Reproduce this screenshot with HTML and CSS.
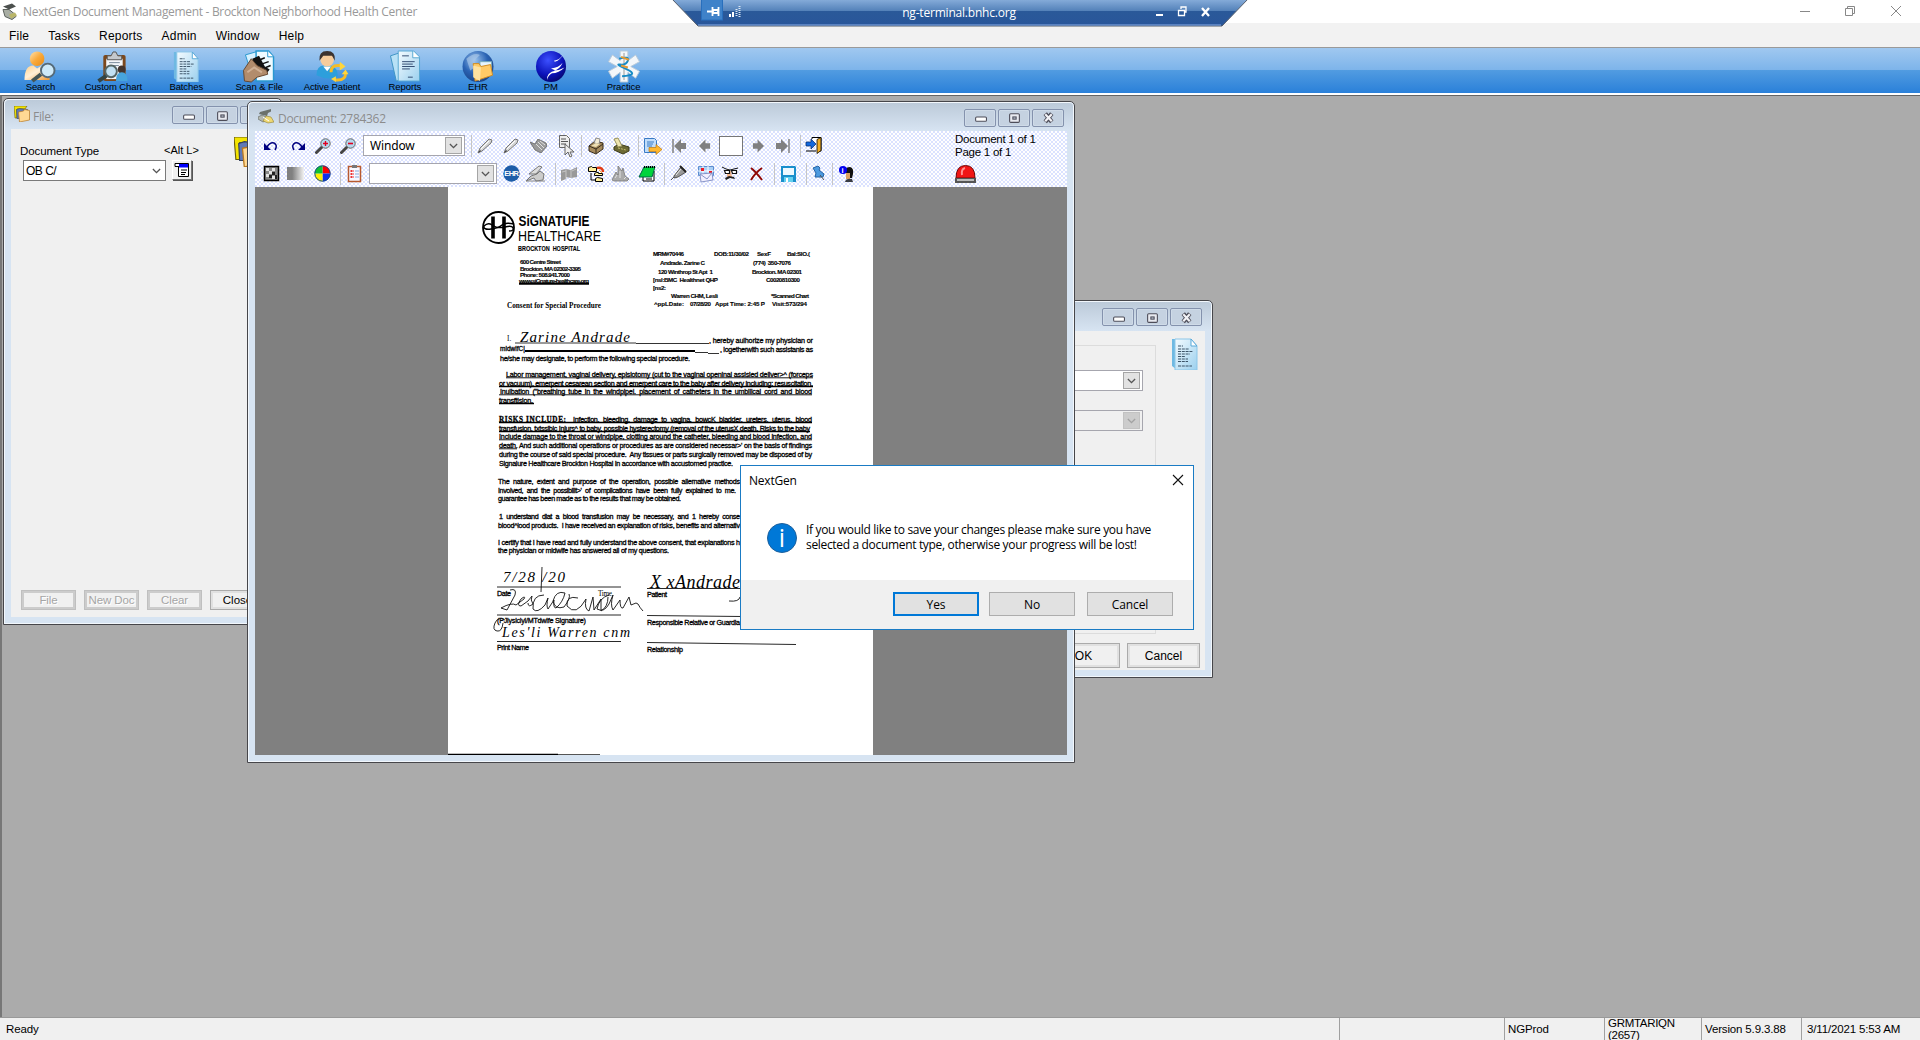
FILE: index.html
```html
<!DOCTYPE html>
<html lang="en">
<head>
<meta charset="utf-8">
<title>NextGen Document Management</title>
<link rel="stylesheet" href="styles.css">
</head>
<body>
<svg class="defs" aria-hidden="true">
  <defs>
    <linearGradient id="paper" x1="0" y1="0" x2="1" y2="1"><stop offset="0" stop-color="#f4fbff"/><stop offset="1" stop-color="#9bd0ee"/></linearGradient>
    <linearGradient id="orange" x1="0" y1="0" x2="1" y2="1"><stop offset="0" stop-color="#ffe2ad"/><stop offset=".5" stop-color="#f9a93a"/><stop offset="1" stop-color="#e98a10"/></linearGradient>
    <linearGradient id="cream" x1="0" y1="0" x2="1" y2="1"><stop offset="0" stop-color="#ffd089"/><stop offset=".45" stop-color="#fff0d8"/><stop offset="1" stop-color="#f0952a"/></linearGradient>
    <radialGradient id="globe" cx=".4" cy=".3" r=".8"><stop offset="0" stop-color="#9cc4ee"/><stop offset=".5" stop-color="#2a63b4"/><stop offset="1" stop-color="#163c7c"/></radialGradient>
    <radialGradient id="ball" cx=".4" cy=".3" r=".8"><stop offset="0" stop-color="#3c50ff"/><stop offset=".6" stop-color="#0b12b8"/><stop offset="1" stop-color="#04045c"/></radialGradient>
    <linearGradient id="fade"><stop offset=".3" stop-color="#808080"/><stop offset="1" stop-color="#f2f2f2"/></linearGradient>
    <symbol id="i-sheet" viewBox="0 0 27 32">
      <path d="M1 1h17v30H5l-4-3z" fill="#6fb9e2"/><path d="M4 1h16l6 7v24H4z" fill="url(#paper)" stroke="#8cc6e8"/><path d="M20 1v7h6z" fill="#fff" stroke="#58a8d8"/>
      <path d="M7 8h5M7 11h11M7 13.500h15M7 16h12M7 18.500h7M7 21h10M7 23.500h10M7 28h14" stroke="#3c5468" stroke-width="1" stroke-dasharray="3 .8"/>
    </symbol>
    <symbol id="i-folders" viewBox="0 0 16 16">
      <path d="M0 0h13l-2 3H3v9H1z" fill="#f4e400" stroke="#665c10" stroke-width=".6"/><path d="M2.500 3.500l3-1 8 1v9H3z" fill="#6079b5" stroke="#35405c" stroke-width=".6"/>
      <path d="M4.500 6l5-1 1-1.500 5 1V14l-10 2z" fill="#ffd994" stroke="#b97920" stroke-width=".7"/>
    </symbol>
    <symbol id="i-scan" viewBox="0 0 16 16">
      <path d="M2 3l11-3v2.500L10 4l-1 3-4-1L1 5z" fill="#6b716b"/><path d="M0 8l4-2 4 2 1 3-4 2-5-3z" fill="#b4b8b0" stroke="#666b65" stroke-width=".7"/>
      <path d="M8 7l5 1 3 5-6 1-5-2z" fill="#efd873" stroke="#8f8030" stroke-width=".6"/><path d="M5 8l6 4" stroke="#fff"/>
    </symbol>
    <symbol id="i-hand" viewBox="0 0 17 14"><path d="M0 3l5 2 3-5 8 4 1 3-6 7-6-3z" fill="#9a9a9a" stroke="#666" stroke-width=".8"/><path d="M6 5l6 6M8 3l6 6M10 2l5 4" stroke="#e0e0e0"/></symbol>
    <symbol id="i-pen" viewBox="0 0 16 16"><path d="M1 15l2-5L12 1l3 1-1 3-9 8z" fill="#d6d6d6" stroke="#777"/><path d="M4 11l8-8" stroke="#fff"/><path d="M1 15l2-3 1 1z" fill="#333"/></symbol>
    <symbol id="i-lens" viewBox="0 0 16 16"><path d="M1.500 14.500l5-5" stroke="#444" stroke-width="3" stroke-linecap="round"/><circle cx="10.500" cy="5.500" r="4.700" fill="#b4d8ee" stroke="#666"/></symbol>
    <symbol id="i-undo" viewBox="0 0 14 12"><path d="M0 3v7h7z" fill="#000080"/><path d="M3 7Q6 2 10 3q4 2 1 7" fill="none" stroke="#000080" stroke-width="1.500"/></symbol>
    <symbol id="i-arrow" viewBox="0 0 13 14"><path d="M0 7l7-7v4h5v6H7v4z" fill="#808080"/></symbol>
    <symbol id="i-chev" viewBox="0 0 10 6"><path d="M1 .8l4 4 4-4" fill="none" stroke="#555" stroke-width="1.500"/></symbol>
    <symbol id="b-min" viewBox="0 0 12 12"><rect x="1.500" y="5.500" width="10" height="4" rx="1" fill="#fff" stroke="#4d4d59"/></symbol>
    <symbol id="b-max" viewBox="0 0 12 12"><rect x="1.500" y="2.500" width="9" height="8" rx="1" fill="#e8eaf0" stroke="#4d4d59"/><rect x="4.500" y="5.500" width="3" height="2" fill="#c5d0df" stroke="#4d4d59"/></symbol>
    <symbol id="b-close" viewBox="0 0 12 12"><path d="M3 2.500l6 7.500M9 2.500L3 10" stroke="#4d4d59" stroke-width="4"/><path d="M3 3l6 6.500M9 3L3 9.500" stroke="#f2f2f6" stroke-width="2"/></symbol>
  </defs>
</svg>

<header class="titlebar">
  <svg class="app-icon" viewBox="0 0 16 16"><path d="M1 3l9-3 4 3-7 3z" fill="#4c504e"/><path d="M1 6l6 0 5 4 2 3-4 3-7-3z" fill="#a9aea4" stroke="#5c615c"/><path d="M7 11l6-2 2 3-6 3z" fill="#b9b568"/></svg>
  <span class="app-title">NextGen Document Management - Brockton Neighborhood Health Center</span>
  <svg class="win-controls" width="110" height="20" viewBox="0 0 110 20" fill="none" stroke="#888"><path d="M5 9.500h10M96 4l10 10M106 4L96 14"/><path d="M50.500 6.500h7v7h-7zM52.500 6v-1.500h7v7H58"/></svg>
</header>

<nav class="menubar"><span>File</span><span>Tasks</span><span>Reports</span><span>Admin</span><span>Window</span><span>Help</span></nav>

<div class="ribbon">
  <div class="tool"><svg viewBox="0 0 32 32"><circle cx="13" cy="8" r="7.500" fill="url(#orange)"/><path d="M0 30q0-15 9-15l4 3 5-3q8 3 8 15z" fill="url(#cream)"/><path d="M8 31l9-7" stroke="#455" stroke-width="4"/><circle cx="24" cy="20" r="7" fill="#cde9f8" stroke="#556a78" stroke-width="2"/></svg><span>Search</span></div>
  <div class="tool"><svg viewBox="0 0 32 32"><rect x="6" y="4" width="23" height="27" rx="2" fill="#7c481c"/><rect x="9" y="8" width="17" height="21" fill="#f4f7fa"/><path d="M10 9V5h4l2-4 3 0 2 4h4v4z" fill="#c4c8cc" stroke="#555"/><path d="M12 12h11M12 15h10" stroke="#789"/><path d="M1 31l9-6" stroke="#344" stroke-width="4"/><circle cx="14" cy="21" r="6" fill="#c2e1f3" stroke="#566" stroke-width="2"/><circle cx="25" cy="19" r="4" fill="#43342c"/><path d="M19 31q0-9 6-9t6 9z" fill="#47a4dc"/></svg><span>Custom Chart</span></div>
  <div class="tool"><svg viewBox="0 0 32 32"><use href="#i-sheet" x="2" width="28" height="32"/></svg><span>Batches</span></div>
  <div class="tool"><svg viewBox="0 0 32 32"><path d="M2 4L16 0l4 27-10 2z" fill="#d7f1ff" stroke="#2898d0"/><path d="M13 0h13l5 6v25H13z" fill="#eefaff" stroke="#2898d0" stroke-width="1.500"/><path d="M25 0v6h6" fill="#fff" stroke="#2898d0"/><path d="M9 8l7-3 6 11 5 3-3 4-9 0z" fill="#111"/><path d="M1 31l-1-11 8-12 6 7 10 5 1 4-11 3-6 5z" fill="#b28c6c" stroke="#65472f"/><path d="M17 9l5-2M20 13l6-2M23 17l5-2" stroke="#111" stroke-width="1.500"/><path d="M4 22l7-5 8 5" fill="none" stroke="#d0b094" stroke-width="2"/></svg><span>Scan &amp; File</span></div>
  <div class="tool"><svg viewBox="0 0 32 32"><path d="M0 25q0-10 8-10h5q9 1 9 11-10 5-22-1z" fill="#2d9fdc"/><path d="M7 16l4 5 4-5z" fill="#fff"/><circle cx="11" cy="9" r="7" fill="#f6cc9c"/><path d="M3 10Q2 0 11 0t8 10l-3-5H7z" fill="#3b332f"/><path d="M15 22q0-7 7-7h3M30 23q0 7-8 7h-3" fill="none" stroke="#f6bc26" stroke-width="3"/><path d="M24 11l6 5-6 4zM20 26v6l-5-3zM26 24l4-5 3 5z" fill="#ffd63c"/></svg><span>Active Patient</span></div>
  <div class="tool"><svg viewBox="0 0 32 32"><path d="M1 5l12-4 6 27-12 3z" fill="#b8e1f6" stroke="#3f94c4"/><path d="M9 0h16l6 6v25H9z" fill="url(#paper)" stroke="#58a8d2"/><path d="M24 0v7h7" fill="#fff" stroke="#58a8d2"/><path d="M13 5h7M13 11h13M13 13.500h11M13 16h13M13 18.500h8M19 27h5" fill="none" stroke="#324a70"/></svg><span>Reports</span></div>
  <div class="tool"><svg viewBox="0 0 32 32"><circle cx="16" cy="16" r="16" fill="url(#globe)"/><path d="M4 8q8-7 14-4l-6 6 3 5-7 5z" fill="#aac8e8" opacity=".65"/><path d="M18 11h12v14H18z" fill="#e6f5ff" stroke="#7ab"/><path d="M11 13h6l2 3 10-2 2 11-18 6z" fill="#ffca66" stroke="#d18b21"/><path d="M11 15v12l7 4 1-14z" fill="#ffe2a0"/></svg><span>EHR</span></div>
  <div class="tool"><svg viewBox="0 0 32 32"><ellipse cx="16" cy="16" rx="15.500" ry="16" fill="url(#ball)"/><path d="M19 10q6-1 9-6-2 5-8 7zM16 18q8-1 12-6-3 7-9 8 6 0 11-3-6 6-13 6-4 2-5 7-1-8 9-10-3-1-5-2z" fill="#fff"/></svg><span>PM</span></div>
  <div class="tool"><svg viewBox="0 0 32 32"><path d="M12 0h8v10l8-6 4 7-9 5 9 5-4 7-8-6v10h-8V22l-8 6-4-7 9-5-9-5 4-7 8 6z" fill="#f4f7fa" stroke="#b9c9d8"/><path d="M16 2v28" stroke="#999"/><path d="M11 8q11-3 9 2t-8 4 7 5-5 7" fill="none" stroke="#168bc5" stroke-width="2"/><path d="M13 6l8 3M13 15l7 2" stroke="#e29a35" stroke-width="2"/></svg><span>Practice</span></div>
</div>

<div class="rdp">
  <svg class="rdp-shape" viewBox="0 0 576 27"><defs><linearGradient id="rdpg" x1="0" y1="0" x2="0" y2="1"><stop offset="0" stop-color="#88aedb"/><stop offset=".45" stop-color="#5280b8"/><stop offset=".46" stop-color="#2a5999"/><stop offset="1" stop-color="#29569a"/></linearGradient></defs>
    <path d="M0-1L26 26h524L576-1z" fill="url(#rdpg)" stroke="#555e6b"/><path d="M26 25h523" stroke="#8aaee8"/>
    <rect x="29.500" y="-1" width="21" height="21" fill="#3f82c9" stroke="#286fbd"/><path d="M35 11.500h5M40.500 7v9M46.500 7v9M41 10h5v3h-5z" stroke="#fff" stroke-width="1.800" fill="none"/>
    <path d="M58 14v3M61 12v5" stroke="#fff" stroke-width="2"/><path d="M64.500 9v8M67.500 6v11" stroke="#dce7f4" stroke-width="2" stroke-dasharray="1 1"/>
    <path d="M484 15h7" stroke="#fff" stroke-width="2"/><path d="M506.500 10.500h6v5h-6zM509 9V7h5v5h-2" fill="none" stroke="#fff" stroke-width="1.300"/><path d="M530 8l7 8M537 8l-7 8" stroke="#fff" stroke-width="2.300"/></svg>
  <span>ng-terminal.bnhc.org</span>
</div>

<main class="workspace">
  <section class="win file-win">
    <div class="win-head"><svg class="wicon" viewBox="0 0 16 16"><use href="#i-folders"/></svg><span class="wtitle">File:</span>
      <div class="caps"><i><svg><use href="#b-min"/></svg></i><i><svg><use href="#b-max"/></svg></i><i><svg><use href="#b-close"/></svg></i></div></div>
    <div class="win-body file-body">
      <div class="type-row">
        <div class="type-col"><label>Document Type</label><div class="combo flat">OB C/<svg class="chev"><use href="#i-chev"/></svg></div></div>
        <div class="alt-col"><label>&lt;Alt L&gt;</label><div class="pick"><svg viewBox="0 0 14 14"><path d="M3.500.5h10v13h-10z" fill="#fff" stroke="#000"/><path d="M0 .5h8v3H0z" fill="#fff" stroke="#000"/><path d="M4 1h9v3.500H4z" fill="#00f"/><path d="M6 7h6M6 9.500h5M6 11.500h4" stroke="#000"/></svg></div></div>
        <svg class="big-folders" viewBox="0 0 16 16"><use href="#i-folders"/></svg>
      </div>
      <div class="file-actions"><button class="dim">File</button><button class="dim">New Doc</button><button class="dim">Clear</button><button>Close</button></div>
    </div>
  </section>

  <section class="win batch-win">
    <div class="win-head"><div class="caps"><i><svg><use href="#b-min"/></svg></i><i><svg><use href="#b-max"/></svg></i><i><svg><use href="#b-close"/></svg></i></div></div>
    <div class="win-body batch-body">
      <div class="batch-main"><div class="group"><div class="combo"><b><svg class="chev"><use href="#i-chev"/></svg></b></div><div class="combo off"><b><svg class="chev"><use href="#i-chev"/></svg></b></div></div><svg class="sheet"><use href="#i-sheet"/></svg></div>
      <div class="batch-actions"><button>OK</button><button>Cancel</button></div>
    </div>
  </section>

  <section class="win doc-win">
    <div class="win-head"><svg class="wicon" viewBox="0 0 16 16"><use href="#i-scan"/></svg><span class="wtitle">Document: 2784362</span>
      <div class="caps"><i><svg><use href="#b-min"/></svg></i><i><svg><use href="#b-max"/></svg></i><i><svg><use href="#b-close"/></svg></i></div></div>
    <div class="win-body">
      <div class="bar bar1">
        <svg width="14" height="12"><use href="#i-undo"/></svg>
        <svg width="14" height="12" class="flip"><use href="#i-undo"/></svg>
        <svg width="16" height="16"><use href="#i-lens"/><path d="M8 5.500h5M10.500 3v5" stroke="#e00020" stroke-width="1.400"/></svg>
        <svg width="16" height="16"><use href="#i-lens"/><path d="M8 5.500h5" stroke="#e00020" stroke-width="1.600"/></svg>
        <div class="combo zoomc">Window<b><svg class="chev"><use href="#i-chev"/></svg></b></div>
        <hr>
        <svg width="16" height="16"><use href="#i-pen"/></svg>
        <svg width="16" height="16"><use href="#i-pen"/></svg>
        <svg width="17" height="14"><use href="#i-hand"/></svg>
        <svg width="16" height="22" viewBox="0 0 16 22"><path d="M.5.500h7l3 3v9H.5z" fill="#eee" stroke="#666"/><path d="M2 4h5M2 6.500h7M2 9h5" stroke="#555"/><path d="M6 9l9 8h-4l2 4-2 1-2-5-3 3z" fill="#eee" stroke="#666"/></svg>
        <hr>
        <svg width="16" height="16" viewBox="0 0 16 16"><path d="M1 8l6-5 8 2v6l-7 5-7-3z" fill="#a58a5d" stroke="#372c1c"/><path d="M6 5l2-5 4 1-1 5z" fill="#f4ecd6" stroke="#888"/><path d="M1 8l7 3 7-5M8 11v4" stroke="#372c1c" fill="none"/><path d="M3 8l5-3 4 1-4 3z" fill="#eee0b5"/></svg>
        <svg width="17" height="16" viewBox="0 0 17 16"><path d="M1 9l5-3 10 3v4l-6 3-9-4z" fill="#6c6934" stroke="#3d3c1c"/><path d="M1 1l4-1 4 8-4 1z" fill="#eee5b0" stroke="#98925d"/><path d="M5 10l8 2" stroke="#c4bd70" stroke-dasharray="2 1"/></svg>
        <hr>
        <svg width="18" height="16" viewBox="0 0 18 16"><path d="M.5.500h10l2 2v12H.5z" fill="#c0dcfa" stroke="#397ac4"/><path d="M3 4h7M3 6h6M3 8h5" stroke="#397ac4"/><path d="M5 9.500h7v-3l6 5-6 5v-3H5z" fill="#ffb72e" stroke="#b67611" stroke-width=".7"/></svg>
        <svg width="14" height="14" viewBox="0 0 14 14"><path d="M1 0v14" stroke="#808080" stroke-width="1.500"/><use href="#i-arrow" x="2" width="13" height="14"/></svg>
        <svg width="12" height="14"><use href="#i-arrow"/></svg>
        <div class="pagebox"></div>
        <svg width="12" height="14" class="flip"><use href="#i-arrow"/></svg>
        <svg width="14" height="14" viewBox="0 0 14 14" class="flip"><path d="M1 0v14" stroke="#808080" stroke-width="1.500"/><use href="#i-arrow" x="2" width="13" height="14"/></svg>
        <hr>
        <svg width="17" height="17" viewBox="0 0 17 17"><path d="M6 2V.5h9V14h-3" fill="#fff" stroke="#000"/><path d="M11 2.500l4-2v13l-4 3z" fill="#f1ad24" stroke="#000" stroke-width=".8"/><path d="M0 5h5V2l5 5-5 5V9H0z" fill="#1268dd" stroke="#052565" stroke-width=".7"/><path d="M0 14h10" stroke="#000"/></svg>
        <div class="counts">Document 1 of 1<br>Page 1 of 1</div>
      </div>
      <div class="bar bar2">
        <svg width="15" height="15" viewBox="0 0 15 15"><path d="M.5.500h14v14H.5z" fill="#888" stroke="#000" stroke-width="1.500"/><path d="M2 2h3v3H2zM8 2h3v3H8zM5 5h3v3H5zM2 8h3v3H2zM8 10h3v3H8z" fill="#e2e2e2"/><path d="M8 6h3v3H8zM5 9h3v3H5zM11 9h2v4h-2z" fill="#222"/></svg>
        <svg width="17" height="14"><rect width="17" height="13" fill="url(#fade)"/></svg>
        <svg width="17" height="17" viewBox="-8.500 -8.500 17 17"><path d="M0 0V-8A8 8 0 0 1 8 0z" fill="#f00"/><path d="M0 0H8A8 8 0 0 1 0 8z" fill="#1030f0"/><path d="M0 0V8A8 8 0 0 1-8 0z" fill="#fe0"/><path d="M0 0H-8A8 8 0 0 1 0-8z" fill="#10c030"/><circle r="7.700" fill="none" stroke="#164d8c"/></svg>
        <hr>
        <svg width="14" height="17" viewBox="0 0 14 17"><path d="M.5 1.500h12v15H.5z" fill="#f8f8ff" stroke="#b85a30" stroke-width="1.500"/><path d="M4 0h5v3H4z" fill="#777"/><path d="M2.500 6h3M2.500 9h3M2.500 12h3" stroke="#e33" stroke-width="1.800" stroke-dasharray="1.500 .5"/><path d="M7 6h4M7 9h4M7 12h4" stroke="#8ad"/></svg>
        <div class="combo wide"><b><svg class="chev"><use href="#i-chev"/></svg></b></div>
        <svg width="17" height="17" viewBox="0 0 17 17"><circle cx="8.500" cy="8.500" r="8.200" fill="#1d5da8"/><text x="1.300" y="11" textLength="14.500" font-size="7.500" font-weight="bold" fill="#fff">EHR</text></svg>
        <svg width="20" height="16" viewBox="0 0 20 16"><path d="M3 8l10-8 3 1-6 7z" fill="#ddd" stroke="#777"/><path d="M0 15l5-5 6-2 3-3 4 3-1 6-7 1-2-3z" fill="#ccc" stroke="#777"/><path d="M0 15h19" stroke="#888"/></svg>
        <hr>
        <svg width="16" height="14" viewBox="0 0 16 14"><path d="M0 3l5-1 5 1 6-3v10l-6 1-5-1v2l-5 2z" fill="#999"/><path d="M5 2v10M10 3v8M1 5l4-1M11 4l4-2" stroke="#c4c4c4"/></svg>
        <svg width="17" height="16" viewBox="0 0 17 16"><path d="M.5 1.500l3-1 1 1h4v4h-8zM6.500 7.500l2-1h2v1h4v2h-8zM7.500 12.500l2-1 5 1v3h-7z" fill="#ffef9a" stroke="#000"/><path d="M9 2q6-1 6 4" fill="none" stroke="#e33d16" stroke-width="2.500"/><path d="M11 4l3 3" stroke="#f9a52a"/><path d="M3 7v7h4" fill="none" stroke="#000"/></svg>
        <svg width="17" height="16" viewBox="0 0 17 16"><path d="M0 14l4-8 2 3V0l4 5 1-3 2 8 4 3-2 2H2z" fill="#aaa" stroke="#777" stroke-width=".8"/><path d="M3 12l2-3M8 12V5M12 13l2-2" stroke="#e2e2e2"/></svg>
        <svg width="17" height="16" viewBox="0 0 17 16"><path d="M4 11v4h11V5" fill="#fff" stroke="#000"/><path d="M7 13h6" stroke="#000"/><path d="M5 1h11l-3 10H0z" fill="#00d43c" stroke="#064"/><path d="M5 1h11" stroke="#000" stroke-width="2" stroke-dasharray="1 1"/></svg>
        <hr>
        <svg width="16" height="15" viewBox="0 0 16 15"><path d="M0 14l3-3M3 10l7-9 5 5-8 5-4 1z" fill="#999" stroke="#555"/><path d="M5 9l5-6" stroke="#eee"/><path d="M9 0l6 6" stroke="#222" stroke-width="2"/></svg>
        <svg width="16" height="16" viewBox="0 0 16 16"><path d="M.5.500h15v9H.5z" fill="#abd0f5" stroke="#5c8dd0"/><path d="M0 5h16M5 0v10M10 0v10" stroke="#fff"/><path d="M3 2h3v3H3zM11 5h3v3h-3z" fill="#ed1c24"/><path d="M2 8l12-1 1 7-12 2z" fill="#f2f0ff" stroke="#8794c8"/><path d="M2 8l7 5 5-6" fill="none" stroke="#8794c8"/></svg>
        <svg width="17" height="16" viewBox="0 0 17 16"><path d="M0 1l4 2 4 1 8-2" fill="none" stroke="#111"/><path d="M5 5h4l1 6H5z" fill="#f5b890"/><path d="M2.500 4.500h5v3h-4zM9.500 4.500h5v3h-4z" fill="#fff" stroke="#111" stroke-width="1.200"/><path d="M3 12l4-2 5 1 1 2-5-1-4 2z" fill="#222"/></svg>
        <svg width="14" height="14" viewBox="0 0 14 14"><path d="M1 1q5 4 11 12M12 1Q5 6 1 13" fill="none" stroke="#8e0707" stroke-width="2"/></svg>
        <hr>
        <svg width="15" height="16" viewBox="0 0 15 16"><path d="M0 0h14l1 1v15H0z" fill="#198fcc"/><path d="M2 2h11v7H2z" fill="#edf9ff"/><path d="M3 11h9v5H3z" fill="#64d1ef"/><path d="M5 12h2v4H5z" fill="#fff"/></svg>
        <hr>
        <svg width="13" height="15" viewBox="0 0 13 15"><path d="M0 2l5-2 2 2-1 2 5 4-1 3H6l-4 0 1-4z" fill="#4c9ae0" stroke="#2463a4"/><path d="M7 9l4 5" stroke="#555"/></svg>
        <hr>
        <svg width="16" height="16" viewBox="0 0 16 16"><path d="M6 4q1-3 5-3 4 1 3 7l-1 4H8z" fill="#111"/><path d="M7 7h4v6H7z" fill="#dba060"/><path d="M6 16q1-4 7-3l1 3z" fill="#3a3d45"/><circle cx="4" cy="4" r="4" fill="#00e"/><text x="2.600" y="7" font-size="7.500" font-weight="bold" fill="#fff">i</text></svg>
        <svg width="21" height="18" viewBox="0 0 21 18"><path d="M1 13Q1 .5 10.500.5T20 13z" fill="#f01515" stroke="#6d0808"/><path d="M7 10q-1-6 3-7" stroke="#ff9090" stroke-width="2" fill="none"/><path d="M0 13h21v5H0z" fill="#555"/><path d="M2 15h17" stroke="#bbb" stroke-width="2"/></svg>
      </div>
      <div class="viewer">
        <svg class="page" viewBox="448 187 425 568" font-size="7.200">
          <rect x="448" y="187" width="425" height="568" fill="#fff"/>
          <g fill="none" stroke="#000"><circle cx="498.500" cy="227.500" r="15.500" stroke-width="1.800"/><path d="M493 216.500v22M504 216.500v22" stroke-width="3.600"/><path d="M484 226q4-4 8-1 6 4 13 2t8 1-4 3M484 226q-1 4 7 3t11-4 12-1" stroke-width="1.400"/></g>
          <text x="518.500" y="226" font-size="14" font-weight="bold" textLength="71" lengthAdjust="spacingAndGlyphs">SiGNATUFIE</text>
          <text x="518" y="241" font-size="14" textLength="83" lengthAdjust="spacingAndGlyphs">HEALTHCARE</text>
          <g class="b">
          <text x="518" y="251" font-size="6.700" textLength="62" lengthAdjust="spacingAndGlyphs">BROCKTON&#160; HOSPITAL</text>
          <g font-size="6.200">
          <text x="520" y="264" textLength="41">600 Centre Street</text>
          <text x="520" y="270.500" textLength="61">Brockton. MA 02302-3395</text>
          <text x="520" y="277" textLength="50">Phone: 508.941.7000</text>
          <text x="519" y="283" textLength="70">www.siGnature-healthcare.org</text>
          <path d="M519 283.700h70" stroke="#000" stroke-width="2.200"/>
          <text x="653" y="256" textLength="31">MRM#70446</text><text x="714" y="256" textLength="35">DOB:11/30/02</text><text x="757" y="256" textLength="14">SexF</text><text x="787" y="256" textLength="23">Bal:SIO.(</text>
          <text x="660" y="264.500" textLength="45">Andrade. Zarine C</text><text x="753" y="264.500" textLength="38">(774)&#160; 350-7076</text>
          <text x="658" y="273.500" textLength="55">120 Winthrop St Apt&#160; 1</text><text x="752" y="273.500" textLength="50">Brockton. MA 02301</text>
          <text x="653" y="281.500" textLength="65">[nsl:BMC&#160; Healthnet QHP</text><text x="766" y="281.500" textLength="34">C0020810300</text>
          <text x="653" y="289.500" textLength="13">[ns2:</text>
          <text x="671" y="297.500" textLength="47">Warren CHM, Lesli</text><text x="771" y="297.500" textLength="38">*Scanned Chart</text>
          <text x="654" y="305.500" textLength="30">^ppLDate:</text><text x="690" y="305.500" textLength="21">07/28/20</text><text x="715" y="305.500" textLength="50">Appt Time: 2:45 P</text><text x="772" y="305.500" textLength="35">Visit:573/294</text>
          </g></g>
          <text x="507" y="308" class="serif" font-weight="bold" textLength="94">Consent for Special Procedure</text>
          <text x="507" y="341" class="serif">I.</text>
          <text x="520" y="342" class="hand" font-size="15" textLength="110">Zarine Andrade</text>
          <path d="M515 343h121M636 343.500h73" stroke="#000" stroke-width=".8"/>
          <path d="M525 351h170" stroke="#000" stroke-width="1.800"/><path d="M695 352.500h13M708 353.500h11" stroke="#000" stroke-width=".8"/>
          <g class="m">
          <text x="709" y="343" textLength="104">, hereby aulhorize my physician or</text>
          <text x="500" y="350.500" font-size="6.500" textLength="25">midwifC|</text><text x="720" y="352" textLength="93">, logetherwith such assistanis as</text>
          <text x="500" y="360.500" textLength="190">he/she may designate, to perform the following special procedure.</text>
          <text x="506" y="376.500" textLength="307">Labor management, vaginal delivery, episiotomy (cut to the vaginal openinal assisied deliver&gt;^ (forceps</text>
          <text x="499" y="385.500" textLength="314">or vacuum). emerpent cesarean section and emerpent care to the baby after delivery including: resuscitation.</text>
          <text x="500" y="393.500" word-spacing="1.500" textLength="312">Inulbation ("breathing tube in the windpipel. placement of catheters in the umbilical cord and blood</text>
          <text x="499" y="402.500" textLength="34">transftision.</text>
          <text x="499" y="421.500" class="serif" font-weight="bold" textLength="67">RISKS INCLUDE:</text><text x="573" y="421.500" textLength="239" word-spacing="2">Infection, bleeding, damage to vagina, bowcK bladder, ureters, uterus, blood</text>
          <text x="499" y="430.500" textLength="311">transfusion, txtssiblc Injurs^ to baby, possible hysterectomy (removal of the uterusX death. Risks to the baby</text>
          <text x="499" y="438.500" textLength="313">Include damage to the throat or windpipe, clotting around the catheter, bleeding and blood infection, and</text>
          <text x="499" y="447.500" textLength="313">death. And such additional operations or procedures as are considered necessar&gt;' on the basis of findings</text>
          <text x="499" y="456.500" textLength="313">during the course of said special procedure.&#160; Any tissues or parts surgically removed may be disposed of by</text>
          <text x="499" y="465.500" textLength="234">Signalure Healthcare Brockton Hospital In accordance with accustomed practice.</text>
          <text x="498" y="484" word-spacing="2" textLength="242">The nature, extent and purpose of the operation, possible allernative methods</text>
          <text x="498" y="493" word-spacing="2" textLength="238">Involved, and the possibilit&gt;' of complications have been fully explained to me.</text>
          <text x="498" y="501" textLength="183">guarantee has been made as to the results that may be obtained.</text>
          <text x="499" y="519" word-spacing="2" textLength="241">1 understand diat a blood transfusion may be necessary, and 1 hereby conse</text>
          <text x="498" y="528" textLength="242">blood^lood products.&#160; I have received an explanation of risks, benefits and alternativ</text>
          <text x="498" y="545" textLength="242">I certify that I have read and fully understand the above consent, that explanations h</text>
          <text x="498" y="553" textLength="171">the physician or midwife has answered all of my questions.</text>
          <text x="497" y="596" textLength="14">Date</text><text x="647" y="597" textLength="20">Patient</text>
          <text x="497" y="623" textLength="89">(PJlysiclyl/MTdwife Signature)</text><text x="647" y="625" textLength="93">Responsible Relative or Guardia</text>
          <text x="497" y="650" textLength="32">Print Name</text><text x="647" y="652" textLength="36">Relationship</text>
          </g>
          <text x="598" y="596" class="serif" textLength="14">Time</text>
          <path d="M506 377.800h307M499 394.800h313M499 439.800h313M499 448.800h18" stroke="#000" stroke-width=".9"/>
          <path d="M499 386.500h314M499 403.500h35M499 422.500h313M499 431.500h311" stroke="#000" stroke-width="1.300"/>
          <path d="M497 587h124M647 588.500h95M497 615h124M647 615.500l95 1M497 641.500h124M647 642.500l149 2" stroke="#111" stroke-width=".9"/>
          <text x="503" y="582" class="hand" font-size="15" textLength="62">7/28 /20</text>
          <text x="650" y="588" class="hand" font-size="18" textLength="90">X xAndrade</text>
          <text x="502" y="637" class="hand" font-size="14" textLength="128">Les'li Warren cnm</text>
          <g fill="none" stroke="#111" stroke-width=".9"><path d="M510 590q7-2 5 5l-8 15-6-2q11-6 15-3l8-6q2-4-3 0-5 7 0 7l7-5 4-5q-2 4 1 8-5 4-5-1M544 595q-12 0-11 14 4 5 12-4l3-7q-2 8 0 11l6-9q-1 8 2 8 7-6 9-15-9-3-12 8 2 9 11 6 7-9 5-13M578 598q-12-3-11 8 9 11 19-7-2 10 3 12l4-14 1 13 7-11v12q7-4 7-14M609 595q-10 3-12 14 7 4 12-5l4-9q-3 10 0 15l7-10q0 9 3 8l6-11 2 8 5-2 2 1q2 4 5 7"/><path d="M542 567l-1 25M505 620q-7-4-10 3t2 8 6-8"/><path d="M740 597q-1 5-11 4"/></g>
          <path d="M448 754.500h110" stroke="#000" stroke-width="1.600"/><path d="M558 754.500h42" stroke="#555"/>
        </svg>
      </div>
    </div>
  </section>

  <section class="dialog">
    <div class="dlg-head"><span>NextGen</span><svg width="12" height="12" viewBox="0 0 12 12"><path d="M1 1l10 10M11 1L1 11" stroke="#111" stroke-width="1.100"/></svg></div>
    <div class="dlg-main"><div class="info">i</div><p>If you would like to save your changes please make sure you have<br>selected a document type, otherwise your progress will be lost!</p></div>
    <div class="dlg-foot"><button class="primary">Yes</button><button>No</button><button class="last">Cancel</button></div>
  </section>
</main>

<footer class="status"><span>Ready</span><span></span><span>NGProd</span><span class="two">GRMTARIQN<br>(2657)</span><span>Version 5.9.3.88</span><span>3/11/2021 5:53 AM</span></footer>
</body>
</html>
```

FILE: styles.css
```css
* { box-sizing: border-box; }
body { margin: 0; width: 1920px; height: 1040px; overflow: hidden; display: flex; flex-direction: column; position: relative; font: 12px "Liberation Sans", Arial, sans-serif; color: #000; background: #ababab; }
.defs { position: absolute; width: 0; height: 0; }
svg { display: block; overflow: visible; }
button { font: inherit; color: #000; padding: 0; margin: 0; border-radius: 0; white-space: nowrap; }

.titlebar { height: 23px; background: #fff; display: flex; align-items: center; padding-left: 2px; color: #999; flex: none; }
.app-icon { width: 16px; height: 17px; margin-right: 5px; }
.app-title { font: 12px "Open Sans", sans-serif; letter-spacing: -.31px; white-space: nowrap; }
.win-controls { margin-left: auto; margin-right: 15px; }
.menubar { height: 24px; flex: none; background: #f2f2f2; display: flex; align-items: center; gap: 19px; padding: 2px 0 0 9px; letter-spacing: .22px; }
.ribbon { height: 48px; flex: none; display: flex; padding-left: 4px; border-top: 1px solid #9a9a9a; border-bottom: 2px solid #fff; background: linear-gradient(#a0c8f0 0, #7db4ea 22px, #529ce1 22px, #2a80d9 100%); }
.tool { width: 72.900px; display: flex; flex-direction: column; align-items: center; padding-top: 3px; font-size: 9.500px; letter-spacing: -.1px; line-height: 10px; white-space: nowrap; }
.tool svg { width: 32px; height: 31px; flex: none; }

.rdp { position: absolute; left: 672px; top: 0; width: 576px; height: 27px; z-index: 5; color: #fff; text-align: center; font: 12px/26px "Open Sans", sans-serif; letter-spacing: -.2px; }
.rdp-shape { position: absolute; left: 0; top: 0; width: 576px; height: 27px; overflow: hidden; }
.rdp span { position: relative; left: -1px; }

.workspace { flex: 1; position: relative; background: #ababab; border-top: 1px solid #646464; border-left: 2px solid #777; }
.win { position: absolute; border: 1px solid #46464a; border-radius: 5px 5px 0 0; background: #d7e4f2; box-shadow: inset 1px 1px #f2f7fc, inset -1px -1px #f2f7fc; display: flex; flex-direction: column; padding: 0 7px 7px; }
.win-head { height: 29px; flex: none; display: flex; align-items: center; margin: 1px -6px 0; padding: 1px 2px 0; background: linear-gradient(#bccad9, #d7e4f2); border-radius: 4px 4px 0 0; color: #8c8c8c; font: 12px "Open Sans", sans-serif; }
.wicon { width: 16px; height: 16px; margin: -6px 3px 0 0; }
.wtitle { letter-spacing: -.3px; padding-top: 2px; }
.caps { display: flex; gap: 2px; margin-left: auto; }
.caps i { width: 32px; height: 18px; border: 1px solid #8492ad; border-radius: 2px; box-shadow: inset 0 0 0 1px #cfdbe8; display: grid; place-items: center; background: #c5d2e1; }
.caps svg { width: 13px; height: 13px; }
.win-body { flex: 1; min-height: 0; background: #f0f0f0; }

.file-win { left: 1px; top: 2px; width: 279px; height: 527px; }
.file-win .wicon { margin: -2px 3px 0 7px; }
.file-win .caps { margin-right: 6px; }
.file-body { display: flex; flex-direction: column; justify-content: space-between; padding: 8px 0 7px 10px; white-space: nowrap; }
.type-row { display: flex; }
.type-col { padding-top: 7px; width: 152px; font-size: 11.500px; }
.type-col label, .alt-col label { display: block; height: 16px; line-height: 14px; }
.type-col label { margin-left: -1px; letter-spacing: -.1px; }
.type-col .combo { margin-left: 2px; width: 143px; }
.alt-col { padding-top: 6px; width: 60px; font-size: 11px; }
.alt-col label { text-indent: -9px; height: 17px; }
.pick { width: 20px; height: 20px; margin-left: -1px; border: 1px solid #fff; border-right-color: #777; border-bottom-color: #777; box-shadow: 1px 1px #555; padding: 2px; }
.pick svg { width: 14px; height: 14px; }
.big-folders { width: 32px; height: 30px; }
.combo { height: 21px; border: 1px solid #a6a6ae; background: #fff; display: flex; align-items: center; justify-content: space-between; padding: 0 2px; }
.combo.flat { border-color: #7a7a7a; padding-right: 4px; font-size: 12px; letter-spacing: -.5px; }
.combo b { margin-left: auto; width: 17px; height: 17px; border: 1px solid #a5a5a5; background: #e2e2e2; display: grid; place-items: center; }
.chev { width: 9px; height: 6px; }
.combo.off { background: #f0f0f0; }
.combo.off b { background: #ccc; border-color: #c2c2c2; }
.combo.off svg { opacity: .35; }
.file-actions { display: flex; gap: 8px; }
.file-actions button { width: 55px; height: 20px; flex: none; font-size: 11.500px; border: 1px solid #aaa; background: #f0f0f0; box-shadow: inset 0 0 0 2px #e0e0e0; }
.file-actions .dim { color: #a5a5a5; border-color: #bfbfbf; box-shadow: inset 0 0 0 2px #ccc; text-shadow: 1px 1px #fff; letter-spacing: -.1px; }

.batch-win { left: 900px; top: 204px; width: 311px; height: 378px; }
.batch-win .caps, .doc-win .caps { margin-right: 7px; }
.batch-body { display: flex; flex-direction: column; justify-content: space-between; padding: 7px 5px 2px 20px; }
.batch-main { display: flex; justify-content: space-between; }
.group { width: 226px; height: 289px; margin-top: 7px; border: 1px solid #dcdcdc; padding: 24px 12px 0; display: flex; flex-direction: column; gap: 19px; }
.sheet { width: 27px; height: 32px; margin-right: 2px; }
.batch-actions { display: flex; justify-content: flex-end; gap: 7px; }
.batch-actions button { width: 73px; height: 25px; border: 1px solid #aaa; background: #f0f0f0; box-shadow: inset 0 0 0 2px #e0e0e0; }

.doc-win { left: 245px; top: 5px; width: 828px; height: 662px; }
.doc-win .wicon { margin: -1px 4px 0 7px; }
.doc-win .win-head { height: 28px; }
.doc-win .win-body { display: flex; flex-direction: column; }
.bar { height: 28px; flex: none; display: grid; align-items: center; padding-left: 9px; background: conic-gradient(#dbe2ff 25%, #fff 0 50%, #dbe2ff 0 75%, #fff 0) 0 0 / 4px 4px; }
.bar1 { grid-template-columns: 27px 24px 25px 23px 108px 6px 26px 27px 29px 22px 7px 25px 25px 6px 28px 27px 20px 33px 24px 24px 6px 149px 100px; padding-top: 1px; }
.bar2 { grid-template-columns: 23px 27px 26px 8px 21px 134px 23px 29px 6px 27px 24px 27px 25px 7px 27px 24px 28px 24px 7px 25px 7px 19px 7px 116px 30px; padding-top: 1px; }
.bar hr { margin: 0; width: 1px; height: 22px; border: 0; background: #c6c6c6; }
.flip { transform: scaleX(-1); }
.zoomc { width: 102px; padding-left: 6px; font: 12px "Noto Sans", sans-serif; letter-spacing: -.15px; }
.wide { width: 128px; }
.pagebox { width: 24px; height: 20px; border: 1px solid #777; background: #fff; }
.counts { line-height: 13px; font-size: 11.500px; letter-spacing: -.25px; white-space: nowrap; }
.viewer { flex: 1; min-height: 0; background: #808080; padding-left: 193px; }
.page { width: 425px; height: 568px; overflow: hidden; }
.page .m { stroke: #000; stroke-width: .3px; }
.page .b { font-weight: bold; stroke: #000; stroke-width: .12px; }
.page .serif { font-family: "Liberation Serif", serif; }
.page .hand { font-family: "Liberation Serif", serif; font-style: italic; }

.dialog { position: absolute; left: 738px; top: 369px; width: 454px; height: 165px; border: 1px solid #1a7bc4; background: #fff; display: flex; flex-direction: column; font: 12px "Open Sans", sans-serif; }
.dlg-head { display: flex; justify-content: space-between; align-items: center; height: 28px; padding: 0 9px 0 8px; letter-spacing: -.2px; }
.dlg-main { flex: 1; display: flex; padding: 29px 0 0 26px; }
.dlg-main p { margin: -1px 0 0 9px; line-height: 15px; white-space: nowrap; letter-spacing: -.33px; }
.info { width: 30px; height: 30px; border-radius: 50%; background: #0078d7; border: 1px solid #1c5f9c; color: #fff; font: 25px/26px "Open Sans", sans-serif; text-align: center; }
.dlg-foot { height: 49px; background: #f0f0f0; display: flex; padding: 12px 0 0 152px; gap: 10px; }
.dlg-foot button { width: 86px; height: 24px; border: 1px solid #adadad; background: #e1e1e1; letter-spacing: -.1px; }
.dlg-foot .primary { border: 2px solid #0078d7; }
.dlg-foot .last { margin-left: 2px; }

.status { height: 23px; flex: none; background: #f0f0f0; border-top: 1px solid #999; box-shadow: 0 -1px #e8e8e8; display: grid; grid-template-columns: 1339px 165px 100px 97px 100px 119px; align-items: start; font-size: 11.500px; white-space: nowrap; overflow: hidden; }
.status span { height: 22px; line-height: 22px; padding-left: 3px; border-left: 1px solid #a0a0a0; letter-spacing: -.15px; overflow: hidden; }
.status span:first-child { border: 0; padding-left: 6px; }
.status span:last-child { padding-left: 5px; }
.status .two { display: flex; flex-direction: column; justify-content: center; line-height: 12.500px; letter-spacing: -.3px; }
```
